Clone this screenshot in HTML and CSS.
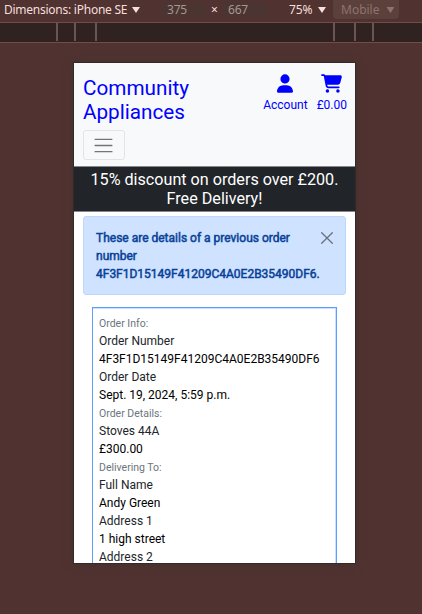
FILE: index.html
```html
<!DOCTYPE html>
<html lang="en">
<head>
<meta charset="utf-8">
<title>Community Appliances</title>
<link rel="stylesheet" href="styles.css">
</head>
<body>
<div class="toolbar">
  <span class="device">Dimensions: iPhone SE</span><i class="caret"></i>
  <span class="size width">375</span><span class="times">×</span><span class="size height">667</span>
  <span class="zoom">75%</span><i class="caret"></i>
  <span class="mobile">Mobile<i class="caret"></i></span>
</div>
<div class="ruler">
  <div class="ticks"><i></i><i></i><i></i></div>
  <div class="ticks right"><i></i><i></i><i></i></div>
</div>
<main class="screen">
  <header class="header">
    <div class="brand-row">
      <h1>Community<br>Appliances</h1>
      <nav>
        <a class="account"><svg width="16" height="19" viewBox="0 0 448 512"><path d="M224 256A128 128 0 1 0 224 0a128 128 0 1 0 0 256zm-45.700 48C79.800 304 0 383.800 0 482.300 0 498.700 13.300 512 29.700 512H418.300c16.400 0 29.700-13.300 29.700-29.700C448 383.800 368.200 304 269.700 304H178.300z"/></svg><span>Account</span></a>
        <a class="cart"><svg width="20" height="18" viewBox="0 0 576 512"><path d="M0 24C0 10.700 10.700 0 24 0H69.500c22 0 41.500 12.800 50.600 32h411c26.300 0 45.500 25 38.600 50.400l-41 152.300c-8.500 31.400-37 53.300-69.500 53.300H170.700l5.400 28.500c2.200 11.300 12.100 19.500 23.600 19.500H488c13.300 0 24 10.700 24 24s-10.700 24-24 24H199.700c-34.600 0-64.300-24.600-70.700-58.500L77.400 54.500c-.7-3.800-4-6.500-7.900-6.500H24C10.700 48 0 37.300 0 24zM128 464a48 48 0 1 1 96 0 48 48 0 1 1-96 0zm336-48a48 48 0 1 1 0 96 48 48 0 1 1 0-96z"/></svg><span>£0.00</span></a>
      </nav>
    </div>
    <button class="menu" aria-label="Menu"><svg width="23" height="23" viewBox="0 0 30 30"><path d="M4 7h22M4 15h22M4 23h22"/></svg></button>
  </header>
  <div class="banner">15% discount on orders over £200.<br>Free Delivery!</div>
  <div class="alert">
    <p>These are details of a previous order<br>number<br>4F3F1D15149F41209C4A0E2B35490DF6.</p>
    <svg class="close" width="12" height="12" viewBox="0 0 12 12"><path d="M.7.7l10.600 10.600M11.300.7L.7 11.300"/></svg>
  </div>
  <dl class="order">
    <dt class="group">Order Info:</dt>
    <dt>Order Number</dt><dd>4F3F1D15149F41209C4A0E2B35490DF6</dd>
    <dt>Order Date</dt><dd>Sept. 19, 2024, 5:59 p.m.</dd>
    <dt class="group">Order Details:</dt>
    <dt>Stoves 44A</dt><dd>£300.00</dd>
    <dt class="group">Delivering To:</dt>
    <dt>Full Name</dt><dd>Andy Green</dd>
    <dt>Address 1</dt><dd>1 high street</dd>
    <dt>Address 2</dt>
  </dl>
</main>
</body>
</html>
```
FILE: styles.css
```css
* { box-sizing: border-box; }
body { margin: 0; width: 422px; height: 614px; overflow: hidden; background: #503331; font-family: Roboto, sans-serif; }
.toolbar { display: flex; height: 22px; padding-left: 4px; font: 12px/19px "Noto Sans", sans-serif; color: #f5dfdb; white-space: nowrap; }
.toolbar > .caret { margin-top: 7px; }
.caret { width: 8px; height: 6px; flex: none; background: currentColor; clip-path: polygon(0 0, 100% 0, 50% 100%); }
.device { width: 128px; letter-spacing: -.25px; }
.size { height: 15px; margin-top: 2px; line-height: 15px; background: #4b3532; color: #a99690; border-radius: 3px; letter-spacing: -.2px; }
.width { width: 43px; margin-left: 22px; padding-left: 5px; }
.times { width: 18px; padding-left: 6px; }
.height { width: 43px; padding-left: 5px; }
.zoom { width: 29px; margin-left: 23px; letter-spacing: -.1px; }
.mobile { display: flex; gap: 7px; width: 66px; height: 19px; margin-left: 7px; padding-left: 8px; background: #5c403c; color: #8d736e; border-radius: 0 0 4px 4px; }
.mobile .caret { margin-top: 7px; }
.ruler { display: flex; height: 21px; border: solid #704d48; border-width: 1px 0; background: #2f2220; }
.ticks { display: grid; grid-template-columns: 18px 21px 2px; height: 18px; margin-left: 56px; }
.ticks.right { grid-template-columns: 21px 18px 2px; margin-left: 236px; }
.ticks i { width: 2px; background: #6a5553; }
.screen { width: 281px; height: 500px; margin: 20px 0 0 74px; overflow: hidden; background: #fff; box-shadow: 0 0 0 1px #33292a, 0 0 9px #41312a; }
.header { height: 103px; padding: 13px 8px 0 9px; background: #f8f9fa; color: #00f; }
.brand-row { display: flex; justify-content: space-between; height: 54px; }
h1 { margin: 0; font-size: 20.700px; font-weight: 400; line-height: 24px; }
nav { display: flex; gap: 9px; margin-top: -2px; }
nav a { display: flex; flex-direction: column; align-items: center; font-size: 12px; line-height: 18px; }
nav svg { display: block; height: 19px; margin-bottom: 3px; fill: currentColor; }
.cart svg { width: 21px; }
.menu { display: grid; place-items: center; width: 42px; height: 30px; padding: 0; background: none; border: 1px solid #e3e4e5; border-radius: 3px; }
.menu svg { margin-left: -1px; fill: none; stroke: #747576; stroke-width: 1.700; stroke-linecap: round; }
.banner { height: 46px; padding-top: 3px; border: solid #85888a; border-width: 1px 0; background: #212529; color: #fff; font-size: 16.150px; line-height: 19px; text-align: center; }
.alert { display: flex; justify-content: space-between; width: 263px; height: 79px; margin: 4px 0 0 9px; padding: 12px; background: #cfe2ff; border: 1px solid #bdd8fe; border-radius: 3px; color: #084298; }
.alert p { margin: 0; font-size: 12px; line-height: 18px; white-space: nowrap; -webkit-text-stroke: .5px #084298; }
.close { flex: none; margin-top: 3px; margin-left: -2px; fill: none; stroke: #677180; stroke-width: 1.300; stroke-linecap: round; }
.order { width: 245px; height: 280px; margin: 12px 0 0 18px; padding: 6px; border: 1px solid #5c9dff; font-size: 12px; line-height: 18px; color: #212529; box-shadow: inset -1px 1px #c9e0ff; }
.order dd { margin: 0; color: #000; }
.order .group { font-size: 10.500px; padding-top: 1px; height: 18px; color: #6c757d; }
```
